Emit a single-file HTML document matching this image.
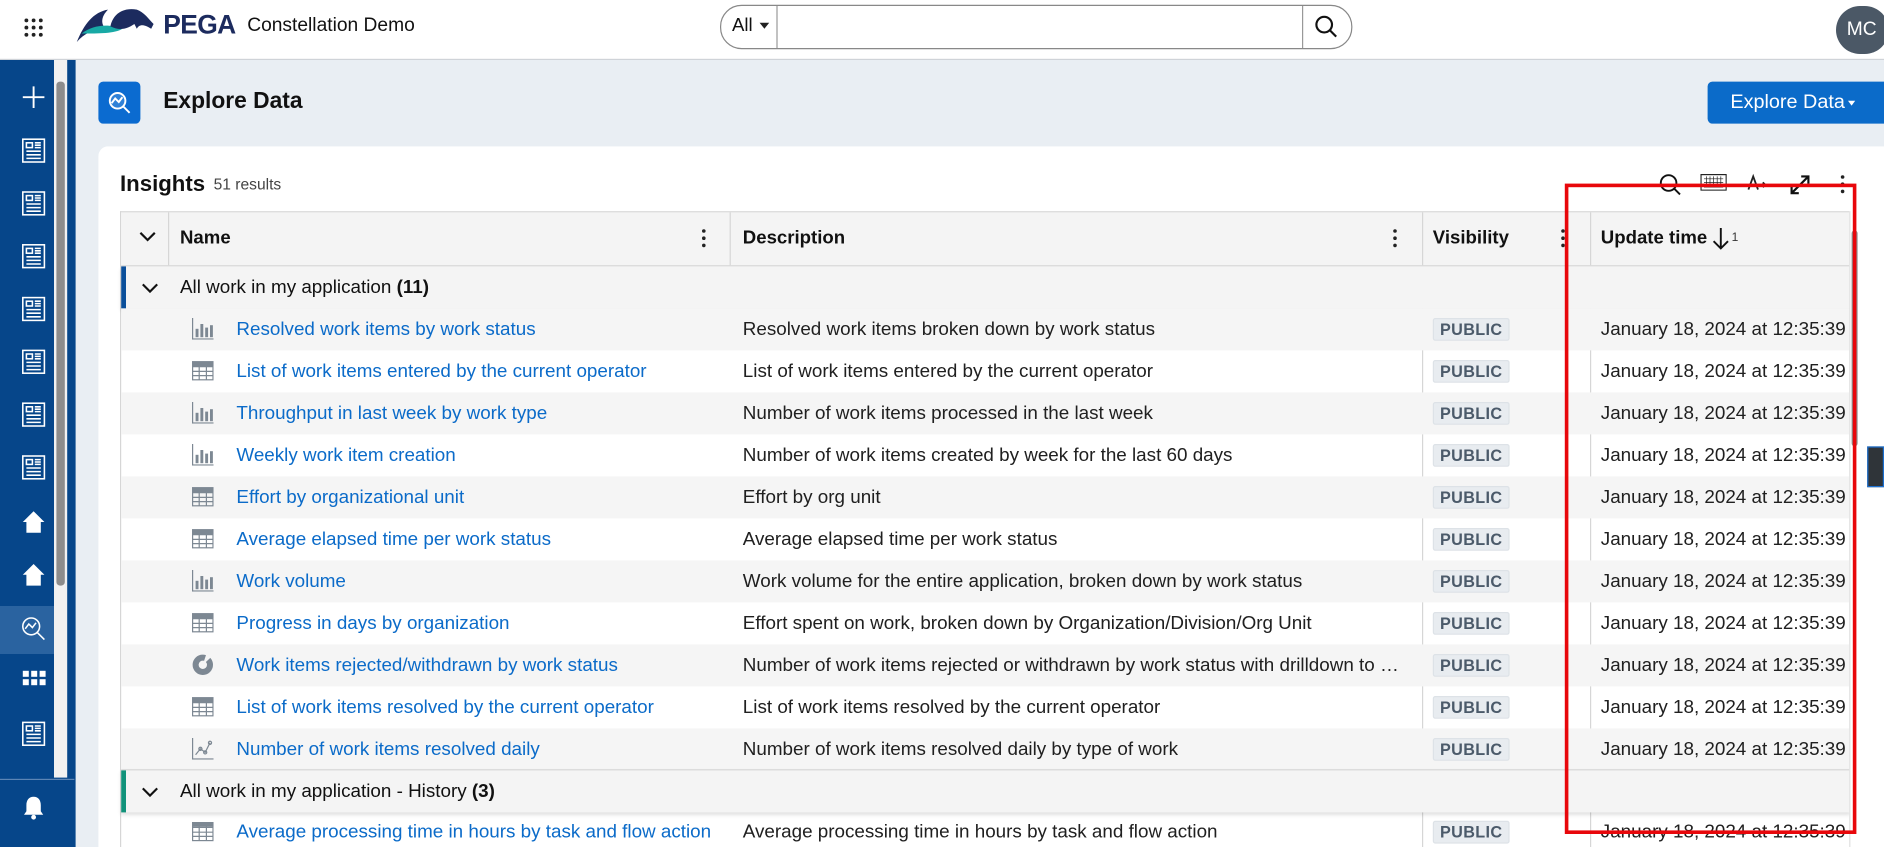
<!DOCTYPE html>
<html><head><meta charset="utf-8">
<style>
html,body{margin:0;padding:0;width:1884px;height:847px;overflow:hidden;background:#e9eef3}
#w{position:absolute;left:0;top:0;width:1570px;height:706px;transform:scale(1.2);transform-origin:0 0;font-family:"Liberation Sans",Arial,sans-serif;overflow:hidden;background:#e9eef3}
.a{position:absolute}
.top{left:0;top:0;width:1570px;height:49px;background:#fff;border-bottom:1px solid #cfd3d8}
.side{left:0;top:50px;width:63px;height:656px;background:#06468a}
.si{position:absolute;left:17px;width:22px;height:22px}
.card{left:82px;top:122px;width:1500px;height:600px;background:#fff;border-radius:8px}
.tbl{left:100px;top:176px;width:1441px;height:540px;border:1px solid #d6d6d6;border-right:none;background:#fff}
.row{position:absolute;left:0;width:1441px;height:35px;font-size:15.7px;color:#202020}
.row span{position:absolute;top:9px;white-space:nowrap}
.g{background:#f5f5f5}
.nm{left:96px;color:#0b6bc9}
.ds{left:518px}
.pb{left:1093px;top:8px!important;background:#e8ecf0;border:1px solid #dde2e7;border-radius:2px;color:#4b5a6a;font-weight:bold;font-size:13.5px;padding:1px 5px;letter-spacing:.3px}
.dt{left:1233px}
.ic{position:absolute;left:59px;top:8px;width:18px;height:18px}
.vl{position:absolute;top:0;width:1px;background:#d6d6d6}
.grp{position:absolute;left:0;width:1441px;height:35px;background:#f4f4f4;box-shadow:0 2px 3px rgba(0,0,0,.12);font-size:15.7px;color:#111}
.dots{position:absolute;width:4px}
.dots i{display:block;width:3px;height:3px;border-radius:2px;background:#222;margin-bottom:3px}
.hd{position:absolute;top:13px;font-size:15.5px;font-weight:bold;color:#111}
</style></head><body><div id="w">
<div class="a top">
  <svg class="a" style="left:20px;top:15px" width="16" height="16" viewBox="0 0 16 16" fill="#222"><circle cx="2" cy="2" r="1.6"/><circle cx="8" cy="2" r="1.6"/><circle cx="14" cy="2" r="1.6"/><circle cx="2" cy="8" r="1.6"/><circle cx="8" cy="8" r="1.6"/><circle cx="14" cy="8" r="1.6"/><circle cx="2" cy="14" r="1.6"/><circle cx="8" cy="14" r="1.6"/><circle cx="14" cy="14" r="1.6"/></svg>
  <svg class="a" style="left:62px;top:6px" width="78" height="30" viewBox="0 0 78 30"><path d="M2 29 C8 14 16 4 28 2 C22 8 22 14 26 18 C16 18 8 22 2 29Z" fill="#1c2b5e"/><path d="M6 22 C16 14 30 14 40 18 C34 22 20 22 6 22Z" fill="#18a9a5"/><path d="M30 16 C32 6 40 0 52 2 C58 4 62 10 66 14 L64 18 C58 14 54 14 52 18 L50 14 C44 18 38 20 30 16Z" fill="#1c2b5e"/></svg>
  <div class="a" style="left:136px;top:8px;font-size:22px;font-weight:bold;color:#1c2b5e;letter-spacing:-.5px">PEGA</div>
  <div class="a" style="left:206px;top:13px;font-size:16px;color:#111">Constellation Demo</div>
  <div class="a" style="left:600px;top:4px;width:525px;height:35px;border:1px solid #888;border-radius:18px;background:#fff"></div>
  <div class="a" style="left:647px;top:5px;width:1px;height:35px;background:#999"></div>
  <div class="a" style="left:1085px;top:5px;width:1px;height:35px;background:#999"></div>
  <div class="a" style="left:610px;top:13px;font-size:15.5px;color:#111">All</div>
  <div class="a" style="left:633px;top:19px;border-left:4px solid transparent;border-right:4px solid transparent;border-top:5px solid #222"></div>
  <svg class="a" style="left:1095px;top:12px" width="20" height="20" viewBox="0 0 20 20" fill="none" stroke="#111" stroke-width="1.8"><circle cx="8.5" cy="8.5" r="6.5"/><path d="M13 13 L18.5 18.5"/></svg>
  <div class="a" style="left:1530px;top:5px;width:44px;height:40px;border-radius:20px;background:#4b5866;color:#fff;font-size:16px;line-height:40px;padding-left:9px;box-sizing:border-box">MC</div>
</div>
<div class="a side">
  <div class="a" style="left:45px;top:0;width:11px;height:598px;background:#f1f1f1"></div>
  <div class="a" style="left:47px;top:18px;width:7px;height:420px;background:#8c8c8c;border-radius:3px"></div>
  <div class="a" style="left:0;top:455px;width:45px;height:40px;background:#2a63a0"></div>
  <div class="a" style="left:0;top:599px;width:62px;height:1px;background:#5c85b5"></div>
  <svg class="si" style="top:20px" viewBox="0 0 22 22" stroke="#fff" stroke-width="1.6"><path d="M11 2V20M2 11H20"/></svg>
  <svg class="si" style="top:64px" viewBox="0 0 22 22" fill="none" stroke="#fff" stroke-width="1.3"><rect x="2" y="2" width="18" height="19"/><rect x="5" y="5" width="5" height="4"/><path d="M12 5H17M12 7H17M12 9H17M5 12H17M5 15H17M5 18H17"/></svg>
  <svg class="si" style="top:108px" viewBox="0 0 22 22" fill="none" stroke="#fff" stroke-width="1.3"><rect x="2" y="2" width="18" height="19"/><rect x="5" y="5" width="5" height="4"/><path d="M12 5H17M12 7H17M12 9H17M5 12H17M5 15H17M5 18H17"/></svg>
  <svg class="si" style="top:152px" viewBox="0 0 22 22" fill="none" stroke="#fff" stroke-width="1.3"><rect x="2" y="2" width="18" height="19"/><rect x="5" y="5" width="5" height="4"/><path d="M12 5H17M12 7H17M12 9H17M5 12H17M5 15H17M5 18H17"/></svg>
  <svg class="si" style="top:196px" viewBox="0 0 22 22" fill="none" stroke="#fff" stroke-width="1.3"><rect x="2" y="2" width="18" height="19"/><rect x="5" y="5" width="5" height="4"/><path d="M12 5H17M12 7H17M12 9H17M5 12H17M5 15H17M5 18H17"/></svg>
  <svg class="si" style="top:240px" viewBox="0 0 22 22" fill="none" stroke="#fff" stroke-width="1.3"><rect x="2" y="2" width="18" height="19"/><rect x="5" y="5" width="5" height="4"/><path d="M12 5H17M12 7H17M12 9H17M5 12H17M5 15H17M5 18H17"/></svg>
  <svg class="si" style="top:284px" viewBox="0 0 22 22" fill="none" stroke="#fff" stroke-width="1.3"><rect x="2" y="2" width="18" height="19"/><rect x="5" y="5" width="5" height="4"/><path d="M12 5H17M12 7H17M12 9H17M5 12H17M5 15H17M5 18H17"/></svg>
  <svg class="si" style="top:328px" viewBox="0 0 22 22" fill="none" stroke="#fff" stroke-width="1.3"><rect x="2" y="2" width="18" height="19"/><rect x="5" y="5" width="5" height="4"/><path d="M12 5H17M12 7H17M12 9H17M5 12H17M5 15H17M5 18H17"/></svg>
  <svg class="si" style="top:374px" viewBox="0 0 22 22" fill="#fff"><path d="M11 2L2 11H5V20H17V11H20Z"/></svg>
  <svg class="si" style="top:418px" viewBox="0 0 22 22" fill="#fff"><path d="M11 2L2 11H5V20H17V11H20Z"/></svg>
  <svg class="si" style="top:463px" viewBox="0 0 22 22" fill="none" stroke="#fff" stroke-width="1.3"><circle cx="9" cy="9" r="7"/><path d="M14 14L20 20M4 11L7 7L10 10L13 6"/></svg>
  <svg class="si" style="top:506px" viewBox="0 0 22 22" fill="#fff"><rect x="2" y="3" width="5" height="5"/><rect x="9" y="3" width="5" height="5"/><rect x="16" y="3" width="5" height="5"/><rect x="2" y="10" width="5" height="5"/><rect x="9" y="10" width="5" height="5"/><rect x="16" y="10" width="5" height="5"/></svg>
  <svg class="si" style="top:550px" viewBox="0 0 22 22" fill="none" stroke="#fff" stroke-width="1.3"><rect x="2" y="2" width="18" height="19"/><rect x="5" y="5" width="5" height="4"/><path d="M12 5H17M12 7H17M12 9H17M5 12H17M5 15H17M5 18H17"/></svg>
  <svg class="si" style="top:612px" viewBox="0 0 22 22" fill="#fff"><path d="M11 2C7 2 5 5 5 9V14L3 17H19L17 14V9C17 5 15 2 11 2Z"/><circle cx="11" cy="19" r="2"/></svg>
</div>
<div class="a" style="left:82px;top:68px;width:35px;height:35px;background:#0b6bd0;border-radius:4px"></div>
<svg class="a" style="left:89px;top:75px" width="22" height="22" viewBox="0 0 22 22" fill="none" stroke="#fff" stroke-width="1.6"><circle cx="9" cy="9" r="6.5" fill="#fff" fill-opacity=".15"/><path d="M14 14L19 19M4 11L7 7L10 10L13 6"/></svg>
<div class="a" style="left:136px;top:74px;font-size:19px;font-weight:bold;color:#111">Explore Data</div>
<div class="a" style="left:1423px;top:68px;width:160px;height:35px;background:#0b6bc9;border-radius:4px"></div>
<div class="a" style="left:1442px;top:76px;font-size:16.5px;color:#fff">Explore Data</div>
<div class="a" style="left:1540px;top:84px;border-left:3.5px solid transparent;border-right:3.5px solid transparent;border-top:4px solid #fff"></div>
<div class="a card"></div>
<div class="a" style="left:100px;top:142px;font-size:18.5px;font-weight:bold;color:#111">Insights</div>
<div class="a" style="left:178px;top:146px;font-size:13px;color:#444">51 results</div>
<svg class="a" style="left:1382px;top:144px" width="20" height="20" viewBox="0 0 20 20" fill="none" stroke="#111" stroke-width="1.6"><circle cx="8.5" cy="8.5" r="6.5"/><path d="M13 13L18 18"/></svg>
<svg class="a" style="left:1417px;top:145px" width="22" height="14" viewBox="0 0 22 14" fill="none" stroke="#222" stroke-width="1"><rect x=".5" y=".5" width="21" height="13"/><path d="M3 4H19M3 7H19M5 2V9M8 2V9M11 2V9M14 2V9M17 2V9M3 11H19" stroke-width=".6"/></svg>
<svg class="a" style="left:1455px;top:144px" width="18" height="18" viewBox="0 0 18 18" fill="none" stroke="#222" stroke-width="1.5"><path d="M2 14L6 3L10 14M3.5 10H8.5M11 10H16M14 8L16 10L14 12"/></svg>
<svg class="a" style="left:1490px;top:144px" width="20" height="20" viewBox="0 0 20 20" fill="none" stroke="#111" stroke-width="1.8"><path d="M3 17L17 3M11 3H17V9M3 11V17H9"/></svg>
<div class="dots" style="left:1534px;top:146px"><i></i><i></i><i></i></div>
<div class="a tbl">
  <div class="a" style="left:0;top:0;width:1441px;height:44px;background:#f4f4f4;border-bottom:1px solid #d6d6d6"></div>
  <svg class="a" style="left:15px;top:15px" width="14" height="10" viewBox="0 0 14 10" fill="none" stroke="#111" stroke-width="1.8"><path d="M1 2L7 8L13 2"/></svg>
  <div class="vl" style="left:39px;height:44px"></div>
  <div class="vl" style="left:507px;height:44px"></div>
  <div class="vl" style="left:1084px;height:44px"></div>
  <div class="vl" style="left:1224px;height:44px"></div>
  <div class="hd" style="left:49px">Name</div>
  <div class="hd" style="left:518px">Description</div>
  <div class="hd" style="left:1093px">Visibility</div>
  <div class="hd" style="left:1233px">Update time</div>
  <svg class="a" style="left:1326px;top:12px" width="14" height="20" viewBox="0 0 14 20" fill="none" stroke="#111" stroke-width="1.6"><path d="M7 1V18M1 12L7 18L13 12"/></svg>
  <div class="a" style="left:1342px;top:16px;font-size:10px;color:#333">1</div>
  <div class="dots" style="left:484px;top:14px"><i></i><i></i><i></i></div>
  <div class="dots" style="left:1060px;top:14px"><i></i><i></i><i></i></div>
  <div class="dots" style="left:1200px;top:14px"><i></i><i></i><i></i></div>
  <div class="vl" style="left:1084px;top:80px;height:384px"></div>
  <div class="vl" style="left:1224px;top:80px;height:384px"></div>
  <div class="vl" style="left:1084px;top:499px;height:40px"></div>
  <div class="vl" style="left:1224px;top:499px;height:40px"></div>

  <div class="grp" style="top:45px"><div class="a" style="left:0;top:0;width:4px;height:35px;background:#0b4f9a"></div>
    <svg class="a" style="left:17px;top:13px" width="14" height="10" viewBox="0 0 14 10" fill="none" stroke="#111" stroke-width="1.8"><path d="M1 2L7 8L13 2"/></svg>
    <span class="a" style="left:49px;top:9px">All work in my application <b>(11)</b></span></div>

  <div class="row g" style="top:80px"><svg class="ic" viewBox="0 0 18 18" fill="#7d8893"><rect x="0" y="0" width="1" height="18"/><rect x="0" y="17" width="18" height="1"/><rect x="3" y="9" width="2.4" height="7"/><rect x="7" y="5" width="2.4" height="11"/><rect x="11" y="8" width="2.4" height="8"/><rect x="15" y="6" width="2.4" height="10"/></svg><span class="nm">Resolved work items by work status</span><span class="ds">Resolved work items broken down by work status</span><span class="pb">PUBLIC</span><span class="dt">January 18, 2024 at 12:35:39</span></div>
  <div class="row" style="top:115px"><svg class="ic" viewBox="0 0 18 18" fill="none" stroke="#7d8893" stroke-width="1"><rect x=".5" y="1.5" width="17" height="15"/><path d="M.5 5.5H17.5M.5 9.5H17.5M.5 13H17.5M6 1.5V16.5M12 1.5V16.5"/><rect x=".5" y="1.5" width="17" height="3" fill="#7d8893"/></svg><span class="nm">List of work items entered by the current operator</span><span class="ds">List of work items entered by the current operator</span><span class="pb">PUBLIC</span><span class="dt">January 18, 2024 at 12:35:39</span></div>
  <div class="row g" style="top:150px"><svg class="ic" viewBox="0 0 18 18" fill="#7d8893"><rect x="0" y="0" width="1" height="18"/><rect x="0" y="17" width="18" height="1"/><rect x="3" y="9" width="2.4" height="7"/><rect x="7" y="5" width="2.4" height="11"/><rect x="11" y="8" width="2.4" height="8"/><rect x="15" y="6" width="2.4" height="10"/></svg><span class="nm">Throughput in last week by work type</span><span class="ds">Number of work items processed in the last week</span><span class="pb">PUBLIC</span><span class="dt">January 18, 2024 at 12:35:39</span></div>
  <div class="row" style="top:185px"><svg class="ic" viewBox="0 0 18 18" fill="#7d8893"><rect x="0" y="0" width="1" height="18"/><rect x="0" y="17" width="18" height="1"/><rect x="3" y="9" width="2.4" height="7"/><rect x="7" y="5" width="2.4" height="11"/><rect x="11" y="8" width="2.4" height="8"/><rect x="15" y="6" width="2.4" height="10"/></svg><span class="nm">Weekly work item creation</span><span class="ds">Number of work items created by week for the last 60 days</span><span class="pb">PUBLIC</span><span class="dt">January 18, 2024 at 12:35:39</span></div>
  <div class="row g" style="top:220px"><svg class="ic" viewBox="0 0 18 18" fill="none" stroke="#7d8893" stroke-width="1"><rect x=".5" y="1.5" width="17" height="15"/><path d="M.5 5.5H17.5M.5 9.5H17.5M.5 13H17.5M6 1.5V16.5M12 1.5V16.5"/><rect x=".5" y="1.5" width="17" height="3" fill="#7d8893"/></svg><span class="nm">Effort by organizational unit</span><span class="ds">Effort by org unit</span><span class="pb">PUBLIC</span><span class="dt">January 18, 2024 at 12:35:39</span></div>
  <div class="row" style="top:255px"><svg class="ic" viewBox="0 0 18 18" fill="none" stroke="#7d8893" stroke-width="1"><rect x=".5" y="1.5" width="17" height="15"/><path d="M.5 5.5H17.5M.5 9.5H17.5M.5 13H17.5M6 1.5V16.5M12 1.5V16.5"/><rect x=".5" y="1.5" width="17" height="3" fill="#7d8893"/></svg><span class="nm">Average elapsed time per work status</span><span class="ds">Average elapsed time per work status</span><span class="pb">PUBLIC</span><span class="dt">January 18, 2024 at 12:35:39</span></div>
  <div class="row g" style="top:290px"><svg class="ic" viewBox="0 0 18 18" fill="#7d8893"><rect x="0" y="0" width="1" height="18"/><rect x="0" y="17" width="18" height="1"/><rect x="3" y="9" width="2.4" height="7"/><rect x="7" y="5" width="2.4" height="11"/><rect x="11" y="8" width="2.4" height="8"/><rect x="15" y="6" width="2.4" height="10"/></svg><span class="nm">Work volume</span><span class="ds">Work volume for the entire application, broken down by work status</span><span class="pb">PUBLIC</span><span class="dt">January 18, 2024 at 12:35:39</span></div>
  <div class="row" style="top:325px"><svg class="ic" viewBox="0 0 18 18" fill="none" stroke="#7d8893" stroke-width="1"><rect x=".5" y="1.5" width="17" height="15"/><path d="M.5 5.5H17.5M.5 9.5H17.5M.5 13H17.5M6 1.5V16.5M12 1.5V16.5"/><rect x=".5" y="1.5" width="17" height="3" fill="#7d8893"/></svg><span class="nm">Progress in days by organization</span><span class="ds">Effort spent on work, broken down by Organization/Division/Org Unit</span><span class="pb">PUBLIC</span><span class="dt">January 18, 2024 at 12:35:39</span></div>
  <div class="row g" style="top:360px"><svg class="ic" viewBox="0 0 18 18"><circle cx="9" cy="9" r="6" fill="none" stroke="#7d8893" stroke-width="5" stroke-dasharray="30 3 5 3"/></svg><span class="nm">Work items rejected/withdrawn by work status</span><span class="ds">Number of work items rejected or withdrawn by work status with drilldown to …</span><span class="pb">PUBLIC</span><span class="dt">January 18, 2024 at 12:35:39</span></div>
  <div class="row" style="top:395px"><svg class="ic" viewBox="0 0 18 18" fill="none" stroke="#7d8893" stroke-width="1"><rect x=".5" y="1.5" width="17" height="15"/><path d="M.5 5.5H17.5M.5 9.5H17.5M.5 13H17.5M6 1.5V16.5M12 1.5V16.5"/><rect x=".5" y="1.5" width="17" height="3" fill="#7d8893"/></svg><span class="nm">List of work items resolved by the current operator</span><span class="ds">List of work items resolved by the current operator</span><span class="pb">PUBLIC</span><span class="dt">January 18, 2024 at 12:35:39</span></div>
  <div class="row g" style="top:430px"><svg class="ic" viewBox="0 0 18 18" fill="none" stroke="#7d8893" stroke-width="1"><path d="M.5 0V17.5H18"/><path d="M3 14L7 9L11 12L15 4"/><circle cx="7" cy="9" r="1.3"/><circle cx="11" cy="12" r="1.3"/><circle cx="15" cy="4" r="1.3"/></svg><span class="nm">Number of work items resolved daily</span><span class="ds">Number of work items resolved daily by type of work</span><span class="pb">PUBLIC</span><span class="dt">January 18, 2024 at 12:35:39</span></div>

  <div class="grp" style="top:464px;border-top:1px solid #d6d6d6"><div class="a" style="left:0;top:0;width:4px;height:35px;background:#11927a"></div>
    <svg class="a" style="left:17px;top:13px" width="14" height="10" viewBox="0 0 14 10" fill="none" stroke="#111" stroke-width="1.8"><path d="M1 2L7 8L13 2"/></svg>
    <span class="a" style="left:49px;top:9px">All work in my application - History <b>(3)</b></span></div>
  <div class="row" style="top:499px"><svg class="ic" viewBox="0 0 18 18" fill="none" stroke="#7d8893" stroke-width="1"><rect x=".5" y="1.5" width="17" height="15"/><path d="M.5 5.5H17.5M.5 9.5H17.5M.5 13H17.5M6 1.5V16.5M12 1.5V16.5"/><rect x=".5" y="1.5" width="17" height="3" fill="#7d8893"/></svg><span class="nm">Average processing time in hours by task and flow action</span><span class="ds">Average processing time in hours by task and flow action</span><span class="pb">PUBLIC</span><span class="dt">January 18, 2024 at 12:35:39</span></div>
</div>
<div class="a" style="left:1541px;top:176px;width:9px;height:530px;background:#fff;border-left:1px solid #e0e0e0"></div>
<div class="a" style="left:1543px;top:192px;width:5px;height:180px;background:#8c8c8c;border-radius:3px"></div>
<div class="a" style="left:1556px;top:372px;width:14px;height:34px;background:#2f3439;border:1px solid #1b6fd0;box-sizing:border-box"></div>
<div class="a" style="left:1304px;top:153px;width:237px;height:536px;border:3px solid #e8070b"></div>
</div></body></html>
